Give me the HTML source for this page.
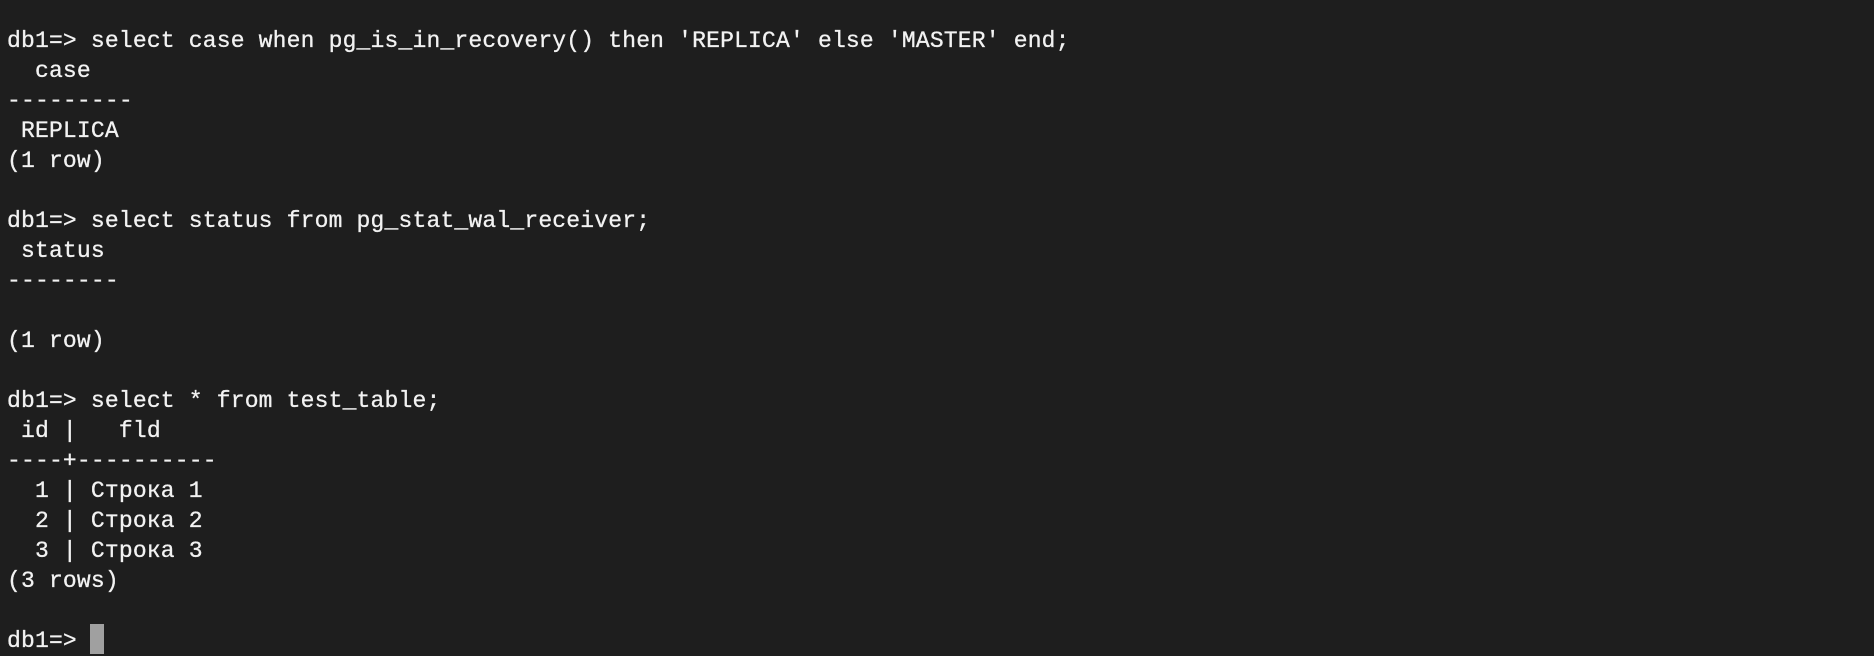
<!DOCTYPE html>
<html><head><meta charset="utf-8"><style>
html,body{margin:0;padding:0;background:#1e1e1e;width:1874px;height:656px;overflow:hidden}
pre{margin:0;position:absolute;left:7px;top:26px;font-family:"Liberation Mono","DejaVu Sans Mono",monospace;font-size:23px;line-height:30px;color:#f2f2f2;letter-spacing:0.18px;-webkit-text-stroke:0.3px #f2f2f2}
.cur{position:absolute;left:90px;top:624px;width:14px;height:30px;background:#a0a0a0}
</style></head><body>
<pre>db1=&gt; select case when pg_is_in_recovery() then 'REPLICA' else 'MASTER' end;
  case
---------
 REPLICA
(1 row)

db1=&gt; select status from pg_stat_wal_receiver;
 status
--------

(1 row)

db1=&gt; select * from test_table;
 id |   fld
----+----------
  1 | Строка 1
  2 | Строка 2
  3 | Строка 3
(3 rows)

db1=&gt; </pre>
<div class="cur"></div>
</body></html>
